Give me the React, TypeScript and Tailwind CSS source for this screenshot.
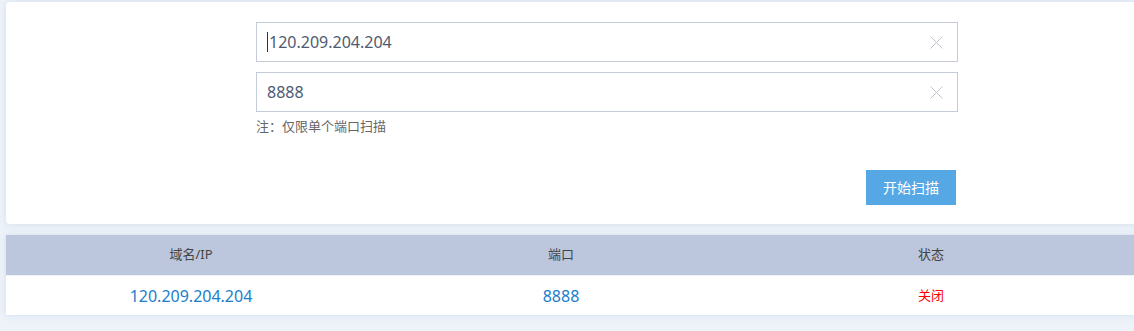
import * as React from "react";

const font = { fontFamily: '"Noto Sans", "Noto Sans CJK SC", sans-serif' };

function ClearIcon() {
  return (
    <svg width="13" height="13" viewBox="0 0 13 13" className="text-[#c0c4cc]">
      <path d="M0.5 0.5L12.5 12.5M12.5 0.5L0.5 12.5" stroke="currentColor" strokeWidth="1" fill="none" />
    </svg>
  );
}

function Field({ value, caret }: { value: string; caret?: boolean }) {
  return (
    <div className="flex h-10 w-[702px] items-center border border-[#c5cbd9] bg-white pl-[10px] pr-[14px]">
      <div className="flex flex-1 items-center text-[16px] text-[#4e5a72]">
        {caret && <span className="mr-[1px] h-[20px] w-px bg-[#333]" />}
        {value}
      </div>
      <ClearIcon />
    </div>
  );
}

export default function App() {
  const rows = [{ host: "120.209.204.204", port: "8888", status: "关闭" }];

  return (
    <div className="min-h-[331px] w-[1134px] overflow-hidden bg-[#eef3f9] pl-[6px] pt-[2px]" style={font}>
      <div className="h-[222px] w-[1140px] rounded-[4px] bg-white shadow-[0_0_6px_rgba(180,200,225,0.5)]">
        <div className="flex flex-col pl-[250px] pt-[20px]">
          <Field value="120.209.204.204" caret />
          <div className="mt-[10px]">
            <Field value="8888" />
          </div>
          <p className="mt-[5px] text-[13px] leading-[18px] text-[#666]">注：仅限单个端口扫描</p>
          <div className="mt-[35px] flex w-[700px] justify-end">
            <button className="h-[35px] w-[90px] bg-[#56a8e4] text-[14px] text-white">开始扫描</button>
          </div>
        </div>
      </div>

      <div className="mt-[11px] w-[1140px] bg-white shadow-[0_0_6px_rgba(180,200,225,0.5)]">
        <div className="grid h-10 grid-cols-[370px_370px_370px_1fr] items-center bg-[#bcc6dd] text-[13px] text-[#444]">
          <div className="text-center">域名/IP</div>
          <div className="text-center">端口</div>
          <div className="text-center">状态</div>
          <div />
        </div>
        {rows.map((r) => (
          <div key={r.host} className="grid h-10 grid-cols-[370px_370px_370px_1fr] items-center border-t border-[#eef1f6]">
            <div className="text-center text-[16px] text-[#1a7dcc]">{r.host}</div>
            <div className="text-center text-[16px] text-[#1a7dcc]">{r.port}</div>
            <div className="text-center text-[13px] text-[#ff0000]">{r.status}</div>
            <div />
          </div>
        ))}
      </div>
    </div>
  );
}
